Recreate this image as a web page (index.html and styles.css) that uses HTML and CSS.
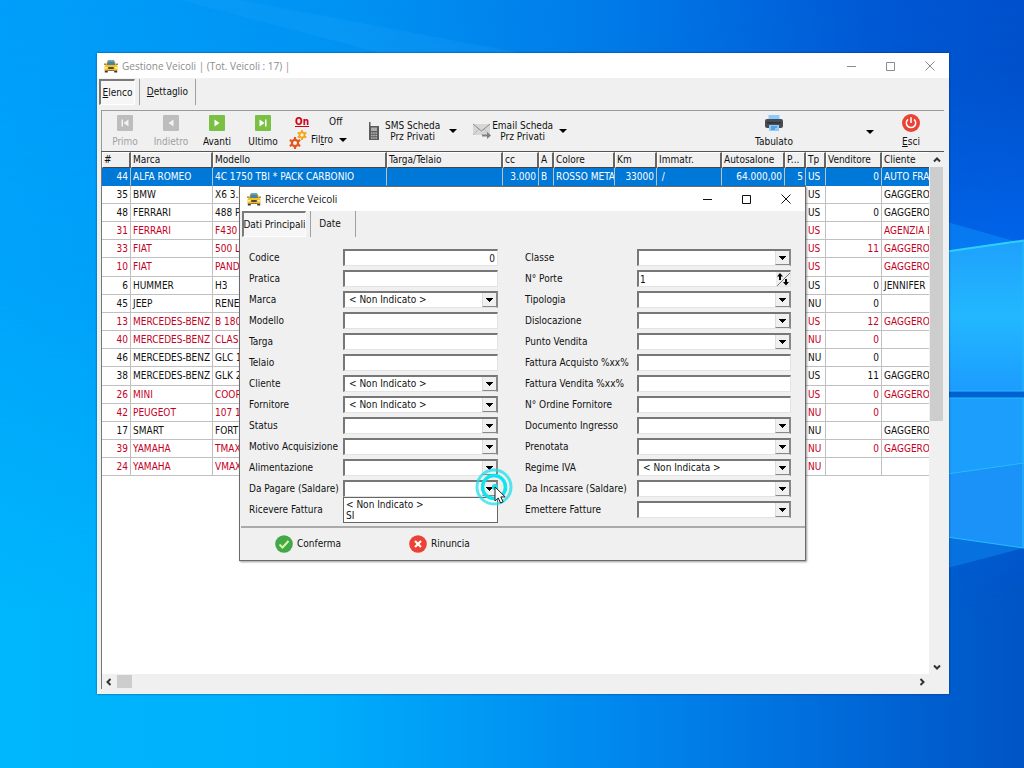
FILE: index.html
```html
<!DOCTYPE html>
<html lang="it">
<head>
<meta charset="utf-8">
<title>Gestione Veicoli</title>
<link rel="stylesheet" href="styles.css">
</head>
<body>
<svg width="0" height="0" class="defs" aria-hidden="true">
  <symbol id="car" viewBox="0 0 14 14">
    <path d="M3.500 1.500h7L12.500 7h-11z" fill="#e0a61c"/>
    <path d="M4 1h6v1H4z" fill="#5fb0dc"/>
    <path d="M4 2.500h6l1.200 3.500H2.800z" fill="#3d86b4"/>
    <path d="M0 4.500h2v1.500H0zM12 4.500h2V6h-2z" fill="#b98216"/>
    <path d="M.5 7.500 2 6h10l1.500 1.500V11.500H.5z" fill="#f9c022"/>
    <path d="M4.300 8h5.400v2H4.300z" fill="#4a4a40"/>
    <path d="M1 8h2.300v1.400H1zM10.700 8H13v1.400h-2.300z" fill="#fff2b0"/>
    <path d="M.8 11.500h3v2h-3zM10.200 11.500h3v2h-3z" fill="#3a3a3a"/><path d="M3.800 11h6.400v1H3.800z" fill="#a37414"/>
  </symbol>
  <symbol id="gear" viewBox="0 0 12 12">
    <circle cx="6" cy="6" r="3.100" fill="none" stroke="currentColor" stroke-width="2.200"/>
    <path d="M6 0v2.500M6 9.500V12M.8 3l2.200 1.300M9 7.700 11.200 9M.8 9 3 7.700M9 4.300 11.200 3" stroke="currentColor" stroke-width="2.200"/>
  </symbol>
</svg>

<svg class="wallpaper" viewBox="0 0 1024 768" preserveAspectRatio="none" aria-hidden="true">
  <defs>
    <linearGradient id="sky" x1="0" y1="0" x2="1" y2="0">
      <stop offset="0" stop-color="#009ffa"/><stop offset=".35" stop-color="#0092f2"/>
      <stop offset=".6" stop-color="#007ae8"/><stop offset=".85" stop-color="#0059d4"/><stop offset="1" stop-color="#0050cc"/>
    </linearGradient>
    <linearGradient id="floor" x1="0" y1="0" x2="1" y2="0">
      <stop offset="0" stop-color="#00b6fc"/><stop offset=".3" stop-color="#00affc"/>
      <stop offset=".6" stop-color="#0088ee"/><stop offset=".85" stop-color="#0066d6"/><stop offset="1" stop-color="#0054c4"/>
    </linearGradient>
    <linearGradient id="fade" x1="0" y1="0" x2="0" y2="1">
      <stop offset="0" stop-color="#000"/><stop offset=".35" stop-color="#333"/><stop offset=".8" stop-color="#fff"/>
    </linearGradient>
    <mask id="low"><rect width="1024" height="768" fill="url(#fade)"/></mask>
    <radialGradient id="glow" cx="1024" cy="330" r="260" gradientUnits="userSpaceOnUse">
      <stop offset="0" stop-color="#0070ff"/><stop offset="1" stop-color="#0068f0" stop-opacity="0"/>
    </radialGradient>
    <linearGradient id="pane" x1="0" y1="0" x2="0" y2="1">
      <stop offset="0" stop-color="#1fa0fc"/><stop offset=".5" stop-color="#22b8ff"/><stop offset="1" stop-color="#1c9cff"/>
    </linearGradient>
  </defs>
  <rect width="1024" height="768" fill="url(#sky)"/>
  <rect width="1024" height="768" fill="url(#floor)" mask="url(#low)"/>
  <path d="M180 0 380 53H520L240 0z" fill="#2fb0ff" opacity=".15"/>
  <rect width="1024" height="768" fill="url(#glow)"/>
  <path d="M940 220 1014 241 940 254z" fill="#0a84f6" opacity=".7"/>
  <path d="M940 536 1024 548 940 570z" fill="#0a7ce6" opacity=".7"/>
  <path d="M940 252 1024 240V391H940z" fill="url(#pane)"/>
  <path d="M940 252.500 1024 240.500" stroke="#2cd2fb" stroke-width="2"/>
  <path d="M940 391H1024V398H940z" fill="#0062d2"/>
  <path d="M940 398H1024V548L940 536z" fill="#1c9efc"/>
  <path d="M940 475 1024 463V548L940 536z" fill="#1a92f8"/>
  <path d="M940 391H1024M940 398H1024M940 536 1024 548M1023 240V391M1023 398V548M940 475 1024 463" stroke="#24bdfc" stroke-width="1" fill="none"/>
</svg>

<main class="window">
  <header class="titlebar inactive">
    <svg class="app-icon"><use href="#car"/></svg>
    <h1>Gestione Veicoli | (Tot. Veicoli : 17) |</h1>
    <div class="controls">
      <button aria-label="Riduci"><svg viewBox="0 0 10 10"><path d="M0 5.500h9"/></svg></button>
      <button aria-label="Ingrandisci"><svg viewBox="0 0 10 10"><path d="M.5 1.500h8v8h-8z"/></svg></button>
      <button aria-label="Chiudi"><svg viewBox="0 0 10 10"><path d="M.5.5l9 9M9.500.5l-9 9"/></svg></button>
    </div>
  </header>
  <nav class="tabs">
    <button class="tab active"><u>E</u>lenco</button>
    <button class="tab"><u>D</u>ettaglio</button>
  </nav>
  <section class="panel">
    <div class="toolbar">
      <button class="tool" disabled><svg viewBox="0 0 16 16"><rect width="16" height="16" rx="1" fill="#bdbdbd"/><path d="M4.500 4.500h1.500v7H4.500zM11.500 4.500v7L6.500 8z" fill="#f2f2f2"/></svg>Primo</button>
      <button class="tool" disabled><svg viewBox="0 0 16 16"><rect width="16" height="16" rx="1" fill="#bdbdbd"/><path d="M10.500 4.500v7L5.500 8z" fill="#f2f2f2"/></svg>Indietro</button>
      <button class="tool"><svg viewBox="0 0 16 16"><rect width="16" height="16" rx="1" fill="#7ac143"/><path d="M5.500 4.500v7L10.500 8z" fill="#fff"/></svg>Avanti</button>
      <button class="tool"><svg viewBox="0 0 16 16"><rect width="16" height="16" rx="1" fill="#7ac143"/><path d="M4.500 4.500v7L9.500 8zM10 4.500h1.500v7H10z" fill="#fff"/></svg>Ultimo</button>
      <div class="filter">
        <div class="switch"><button class="on"><u>On</u></button><button>Off</button></div>
        <button class="filter-button">
          <svg viewBox="0 0 19 19"><use href="#gear" x="8" y="0" width="10" height="10" color="#f6a316"/><use href="#gear" x="0" y="7" width="12" height="12" color="#e4571b"/></svg>
          <span>Fil<u>t</u>ro</span><i class="caret"></i>
        </button>
      </div>
      <button class="wide sms">
        <svg viewBox="0 0 12 20"><path d="M1 1h1.500v4H11v14H1z" fill="#5b5b5b"/><path d="M3 6.500h6v3.500H3z" fill="#a9b0b0"/><path d="M3 12h6M3 14.500h6M3 17h6" stroke="#b4b4b4" stroke-width="1.300" stroke-dasharray="1.600 .6"/></svg>
        <span>SMS Scheda<br>Prz Privati</span><i class="caret"></i>
      </button>
      <button class="wide mail">
        <svg viewBox="0 0 18 16"><path d="M0 1h17v11H0z" fill="#d6d6d6"/><path d="M0 1l8.500 7L17 1" stroke="#8b8b8b" fill="none"/><path d="M0 12l6-6M17 12l-6-6" stroke="#bcbcbc" fill="none"/><path d="M9 11.500h5V9l4 3.500-4 3.500v-2.500H9z" fill="#808080"/></svg>
        <span>Email Scheda<br>Prz Privati</span><i class="caret"></i>
      </button>
      <button class="tool print"><svg viewBox="0 0 18 18"><path d="M3.500 1h11v5h-11z" fill="#8fcbf8"/><rect y="5" width="18" height="9" rx="2" fill="#474d52"/><path d="M2 8h14v1.500H2z" fill="#2d3236"/><path d="M4 11h10v6H4z" fill="#8fcbf8"/><path d="M6 13h6M6 15h4" stroke="#1d78c8"/></svg>Tabulato</button>
      <button class="caret-button" aria-label="Altro"><i class="caret"></i></button>
      <button class="tool exit"><svg viewBox="0 0 18 18"><circle cx="9" cy="9" r="9" fill="#ea4335"/><path d="M6 5.300a4.700 4.700 0 1 0 6 0M9 3.200V9" stroke="#fff" stroke-width="1.500" fill="none"/></svg><span><u>E</u>sci</span></button>
    </div>
    <div class="grid">
      <div class="sheet">
        <table>
          <colgroup><col class="c29"><col class="c82"><col class="c174"><col class="c116"><col class="c36"><col class="c15"><col class="c61"><col class="c42"><col class="c65"><col class="c63"><col class="c21"><col class="c20"><col class="c56"><col></colgroup>
          <thead><tr><th>#<th>Marca<th>Modello<th>Targa/Telaio<th>cc<th>A<th>Colore<th>Km<th>Immatr.<th>Autosalone<th>P...<th>Tp<th>Venditore<th>Cliente</tr></thead>
          <tbody>
          <tr class="selected"><td>44<td>ALFA ROMEO<td>4C 1750 TBI * PACK CARBONIO<td><td>3.000<td>B<td>ROSSO METAL<td>33000<td>&nbsp;/<td>64.000,00<td>5<td>US<td>0<td>AUTO FRA</tr>
          <tr><td>35<td>BMW<td>X6 3.5<td><td><td><td><td><td><td><td><td>US<td><td>GAGGERO</tr>
          <tr><td>48<td>FERRARI<td>488 P<td><td><td><td><td><td><td><td><td>US<td>0<td>GAGGERO</tr>
          <tr class="red"><td>31<td>FERRARI<td>F430<td><td><td><td><td><td><td><td><td>US<td><td>AGENZIA D</tr>
          <tr class="red"><td>33<td>FIAT<td>500 L<td><td><td><td><td><td><td><td><td>US<td>11<td>GAGGERO</tr>
          <tr class="red"><td>10<td>FIAT<td>PANDA<td><td><td><td><td><td><td><td><td>US<td><td>GAGGERO</tr>
          <tr><td>6<td>HUMMER<td>H3<td><td><td><td><td><td><td><td><td>US<td>0<td>JENNIFER</tr>
          <tr><td>45<td>JEEP<td>RENEG<td><td><td><td><td><td><td><td><td>NU<td>0<td></tr>
          <tr class="red"><td>13<td>MERCEDES-BENZ<td>B 180<td><td><td><td><td><td><td><td><td>US<td>12<td>GAGGERO</tr>
          <tr class="red"><td>40<td>MERCEDES-BENZ<td>CLASS<td><td><td><td><td><td><td><td><td>NU<td>0<td></tr>
          <tr><td>46<td>MERCEDES-BENZ<td>GLC 1<td><td><td><td><td><td><td><td><td>NU<td>0<td></tr>
          <tr><td>38<td>MERCEDES-BENZ<td>GLK 2<td><td><td><td><td><td><td><td><td>US<td>11<td>GAGGERO</tr>
          <tr class="red"><td>26<td>MINI<td>COOP<td><td><td><td><td><td><td><td><td>US<td>0<td>GAGGERO</tr>
          <tr class="red"><td>42<td>PEUGEOT<td>107 1<td><td><td><td><td><td><td><td><td>NU<td>0<td></tr>
          <tr><td>17<td>SMART<td>FORT<td><td><td><td><td><td><td><td><td>NU<td><td>GAGGERO</tr>
          <tr class="red"><td>39<td>YAMAHA<td>TMAX<td><td><td><td><td><td><td><td><td>NU<td>0<td>GAGGERO</tr>
          <tr class="red"><td>24<td>YAMAHA<td>VMAX<td><td><td><td><td><td><td><td><td>NU<td><td></tr>
          </tbody>
        </table>
      </div>
      <div class="vbar">
        <svg viewBox="0 0 8 8"><path d="M1 5.500l3-3 3 3"/></svg><div class="thumb"></div><svg class="end" viewBox="0 0 8 8"><path d="M1 2.500l3 3 3-3"/></svg>
      </div>
      <div class="hbar">
        <svg viewBox="0 0 8 8"><path d="M5.500 1l-3 3 3 3"/></svg><div class="thumb"></div><svg class="end" viewBox="0 0 8 8"><path d="M2.500 1l3 3-3 3"/></svg>
      </div>
    </div>
  </section>
</main>

<section class="dialog" role="dialog" aria-labelledby="dialog-title">
  <header class="titlebar">
    <svg class="app-icon"><use href="#car"/></svg>
    <h2 id="dialog-title">Ricerche Veicoli</h2>
    <div class="controls">
      <button aria-label="Riduci"><svg viewBox="0 0 10 10"><path d="M0 5.500h9"/></svg></button>
      <button aria-label="Ingrandisci"><svg viewBox="0 0 10 10"><path d="M.5 1.500h8v8h-8z"/></svg></button>
      <button aria-label="Chiudi"><svg viewBox="0 0 10 10"><path d="M.5.5l9 9M9.500.5l-9 9"/></svg></button>
    </div>
  </header>
  <nav class="tabs">
    <button class="tab active">Dati Principali</button>
    <button class="tab">Date</button>
  </nav>
  <form class="fields">
    <div class="column">
      <label for="codice">Codice</label><input id="codice" class="number" value="0">
      <label for="pratica">Pratica</label><input id="pratica">
      <label for="marca">Marca</label><div class="combo"><select id="marca"><option>&lt; Non Indicato &gt;</select></div>
      <label for="modello">Modello</label><input id="modello">
      <label for="targa">Targa</label><input id="targa">
      <label for="telaio">Telaio</label><input id="telaio">
      <label for="cliente">Cliente</label><div class="combo"><select id="cliente"><option>&lt; Non Indicato &gt;</select></div>
      <label for="fornitore">Fornitore</label><div class="combo"><select id="fornitore"><option>&lt; Non Indicato &gt;</select></div>
      <label for="status">Status</label><div class="combo"><select id="status"><option></select></div>
      <label for="motivo">Motivo Acquisizione</label><div class="combo"><select id="motivo"><option></select></div>
      <label for="alim">Alimentazione</label><div class="combo"><select id="alim"><option></select></div>
      <label for="pagare">Da Pagare (Saldare)</label>
      <div class="combo"><select id="pagare"><option></select>
        <ul class="dropdown" role="listbox"><li role="option">&lt; Non Indicato &gt;</li><li role="option">SI</li></ul>
        <svg class="pointer" viewBox="0 0 40 40" aria-hidden="true">
          <circle cx="19" cy="19" r="17" fill="none" stroke="#1fe0ea" stroke-width="3" opacity=".75"/>
          <circle cx="19" cy="19" r="11.500" fill="none" stroke="#10e4ee" stroke-width="3.500"/>
          <circle cx="20" cy="19" r="3" fill="#12dfe9"/>
          <path d="M20 19v14l3.300-3 2.300 5 2.500-1.100-2.300-5h4.400z" fill="#fff" stroke="#222" stroke-width="1"/>
        </svg>
      </div>
      <label for="ricevere">Ricevere Fattura</label><div class="combo"><select id="ricevere"><option></select></div>
    </div>
    <div class="column">
      <label for="classe">Classe</label><div class="combo"><select id="classe"><option></select></div>
      <label for="porte">N° Porte</label>
      <div class="spin"><input id="porte" value="1"><button type="button" aria-label="Aumenta o diminuisci"><svg viewBox="0 0 14 14"><path d="M1 14 14 1" stroke="#777"/><path d="M4 1 1 4.500h2V8h2V4.500h2zM10 13.500 7 10h2V7h2v3h2z" fill="#000"/></svg></button></div>
      <label for="tipologia">Tipologia</label><div class="combo"><select id="tipologia"><option></select></div>
      <label for="disl">Dislocazione</label><div class="combo"><select id="disl"><option></select></div>
      <label for="punto">Punto Vendita</label><div class="combo"><select id="punto"><option></select></div>
      <label for="facq">Fattura Acquisto %xx%</label><input id="facq">
      <label for="fven">Fattura Vendita %xx%</label><input id="fven">
      <label for="ordine">N° Ordine Fornitore</label><input id="ordine">
      <label for="doc">Documento Ingresso</label><div class="combo"><select id="doc"><option></select></div>
      <label for="pren">Prenotata</label><div class="combo"><select id="pren"><option></select></div>
      <label for="iva">Regime IVA</label><div class="combo"><select id="iva"><option>&lt; Non Indicata &gt;</select></div>
      <label for="incassare">Da Incassare (Saldare)</label><div class="combo"><select id="incassare"><option></select></div>
      <label for="emettere">Emettere Fatture</label><div class="combo"><select id="emettere"><option></select></div>
    </div>
  </form>
  <footer class="actions">
    <button><svg viewBox="0 0 18 18"><circle cx="9" cy="9" r="8.800" fill="#43a847"/><path d="M4.500 9.500l3 3 6-6.500" stroke="#d8f5a2" stroke-width="2" fill="none"/></svg>Conferma</button>
    <button><svg viewBox="0 0 18 18"><circle cx="9" cy="9" r="8.800" fill="#ea4335"/><path d="M6 6l6 6M12 6l-6 6" stroke="#fff" stroke-width="2.200"/></svg>Rinuncia</button>
  </footer>
</section>
</body>
</html>
```
FILE: styles.css
```css
* { box-sizing: border-box; }
html, body { height: 100%; }
body {
  margin: 0;
  position: relative;
  overflow: hidden;
  background: #0090f0;
  color: #111;
  font: 10px/12px "DejaVu Sans Condensed", "Noto Sans", sans-serif;
}
button, input, select { font: inherit; color: inherit; margin: 0; padding: 0; border: 0; background: none; border-radius: 0; }
button { display: flex; align-items: center; justify-content: center; white-space: nowrap; }
.defs { position: absolute; }
.wallpaper { position: absolute; inset: 0; width: 100%; height: 100%; }

/* Windows */
.window {
  position: absolute;
  inset: 53px 75px 74px 97px;
  display: flex;
  flex-direction: column;
  background: #f0f0f0;
  box-shadow: 0 0 2px rgba(0, 20, 60, .6);
}
.dialog {
  position: absolute;
  top: 186px;
  left: 239px;
  right: 218px;
  background: #f0f0f0;
  border: 1px solid #6b6b6b;
  box-shadow: 1px 1px 2px rgba(0, 0, 0, .4);
}
.titlebar { display: flex; align-items: center; height: 25px; background: #fff; padding-left: 7px; flex: none; }
.dialog .titlebar { height: 24px; }
.titlebar h1, .titlebar h2 { margin: 0 0 0 4px; font: 10px/14px "Open Sans", sans-serif; flex: 1; }
.window > .titlebar h1 { color: #8c8c8c; }
.app-icon { width: 14px; height: 14px; }
.controls { display: flex; }
.controls button { width: 39px; height: 24px; }
.controls svg { width: 10px; height: 10px; fill: none; stroke: #111; }
.inactive .controls svg { stroke: #8c8c8c; }

.tabs { display: flex; padding-left: 2px; }
.window > .tabs { padding-top: 1px; }
.tab { height: 26px; border-right: 1px solid #a0a0a0; }
.window .tab { width: 57px; }
.window .tab.active { width: 36px; }
.tab.active { border: 1px solid #fff; border-top: 2px solid #7a7a7a; border-left: 2px solid #7a7a7a; background: #f6f6f6; }
.tab.active + .tab { margin-left: 4px; border-left: 1px solid #a0a0a0; }
.dialog .tab { width: 46px; padding-right: 6px; }
.dialog .tab.active { width: 64px; padding: 0; }

/* Toolbar */
.panel { flex: 1; min-height: 0; display: flex; flex-direction: column; margin: 5px 5px 5px 4px; border-top: 1px solid #9a9a9a; border-left: 1px solid #9a9a9a; }
.toolbar { display: flex; align-items: flex-start; height: 40px; padding-top: 3px; flex: none; }
.tool { width: 46px; flex-direction: column; gap: 4px; }
.tool svg { width: 18px; height: 18px; }
.tool:nth-child(-n+4) svg { width: 16px; height: 16px; margin: 1px; }
.tool:disabled { color: #a0a0a0; }
.caret { border: 4px solid transparent; border-top-color: #000; border-bottom: 0; }
.filter { width: 66px; }
.switch { display: flex; gap: 20px; padding-left: 9px; height: 16px; align-items: center; }
.on { color: #d00010; font-weight: bold; }
.filter-button { gap: 3px; margin-left: 3px; }
.filter-button svg { width: 19px; height: 19px; }
.filter-button .caret { margin-left: 3px; }
.wide { height: 34px; line-height: 11px; }
.wide .caret { margin-left: 9px; }
.sms { margin-left: 16px; }
.sms svg { width: 12px; height: 20px; margin-right: 5px; }
.mail { margin-left: 16px; }
.mail svg { width: 18px; height: 16px; margin-right: 1px; }
.mail .caret { margin-left: 6px; }
.print { margin-left: auto; }
.caret-button { height: 36px; width: 30px; margin-left: 58px; }
.exit { margin-left: 3px; margin-right: 10px; }

/* Vehicle list */
.grid { flex: 1; min-height: 0; display: grid; grid-template: minmax(0, 1fr) 15px / minmax(0, 1fr) 15px; background: #fff; border-top: 1px solid #555; border-left: 1px solid #777; margin-left: -1px; }
.sheet { overflow: hidden; }
table { width: 100%; table-layout: fixed; border-collapse: separate; border-spacing: 0; }
.c15 { width: 15px; } .c20 { width: 20px; } .c21 { width: 21px; } .c29 { width: 29px; }
.c36 { width: 36px; } .c42 { width: 42px; } .c56 { width: 56px; } .c61 { width: 61px; }
.c63 { width: 63px; } .c65 { width: 65px; } .c82 { width: 82px; } .c116 { width: 116px; } .c174 { width: 174px; }
th, td { padding: 0 2px; overflow: hidden; white-space: nowrap; text-align: left; font-weight: normal; }
th { height: 16px; background: #f0f0f0; border-right: 2px solid #666; border-bottom: 1px solid #444; border-top: 1px solid #fff; border-left: 1px solid #fff; padding: 0 1px; }
td { height: 18px; border-right: 1px solid #c0c0c0; border-bottom: 1px solid #c0c0c0; }
tbody tr:nth-child(6n) td { height: 19px; }
td:nth-child(1), td:nth-child(5), td:nth-child(8), td:nth-child(10), td:nth-child(11), td:nth-child(13) { text-align: right; }
th:last-child, td:last-child { border-right: 0; padding-right: 0; }
.red { color: #c4001c; }
.selected td { background: #0078d7; color: #fff; border-bottom-color: #0078d7; }
.vbar { display: flex; flex-direction: column; align-items: center; background: #f0f0f0; padding-top: 4px; }
.vbar .thumb { width: 13px; height: 254px; margin-top: 3px; background: #cdcdcd; }
.grid svg { width: 8px; height: 8px; fill: none; stroke: #333; stroke-width: 2; flex: none; }
.vbar .end { margin: auto 0 3px; }
.hbar { grid-column: 1 / -1; display: flex; align-items: center; background: #f0f0f0; padding: 0 18px 0 3px; }
.hbar .thumb { width: 15px; height: 13px; margin-left: 4px; background: #cdcdcd; }
.hbar .end { margin: 0 0 0 auto; }

/* Search form */
.fields { display: grid; grid-template-columns: calc(50% - 22px) 1fr; gap: 27px; padding: 12px 14px 8px 9px; }
.column { display: grid; grid-template-columns: 94px 1fr; grid-auto-rows: 17px; row-gap: 4px; align-items: center; white-space: nowrap; }
.column + .column { grid-template-columns: 112px 1fr; }
.column input, .combo, .spin { height: 17px; width: 100%; min-width: 0; background: #fff; border: 1px solid #e3e3e3; border-top: 2px solid #777; border-left: 2px solid #777; }
.column input { padding: 0 2px; }
.number { text-align: right; }
.combo, .spin { position: relative; display: flex; }
.combo { border-right: 2px solid #888; }
.combo select { appearance: none; flex: 1; min-width: 0; padding-left: 4px; }
.combo::after {
  content: "";
  position: absolute;
  top: 0; right: 0; bottom: 0;
  width: 13px;
  pointer-events: none;
  background: linear-gradient(#000, #000) 3px 5px / 7px 1px no-repeat, linear-gradient(#000, #000) 4px 6px / 5px 1px no-repeat, linear-gradient(#000, #000) 5px 7px / 3px 1px no-repeat, linear-gradient(#000, #000) 6px 8px / 1px 1px no-repeat, #f0f0f0;
  border-left: 1px solid #ddd;
  border-bottom: 1px solid #888;
}
.column .spin input { border: 0; height: 14px; padding: 0 1px; }
.spin button { width: 14px; background: #eee; flex: none; }
.spin svg { width: 14px; height: 14px; }
.dropdown { position: absolute; z-index: 2; top: 15px; left: -2px; right: -2px; margin: 0; padding: 1px 2px; list-style: none; background: #fff; border: 1px solid #666; line-height: 11px; }
.pointer { position: absolute; z-index: 3; width: 40px; height: 40px; right: -19px; top: -14px; }

.actions { display: flex; gap: 68px; height: 34px; padding-left: 34px; margin-left: 1px; border-top: 2px solid #aaa; }
.actions button { gap: 4px; }
.actions svg { width: 18px; height: 18px; }
```
